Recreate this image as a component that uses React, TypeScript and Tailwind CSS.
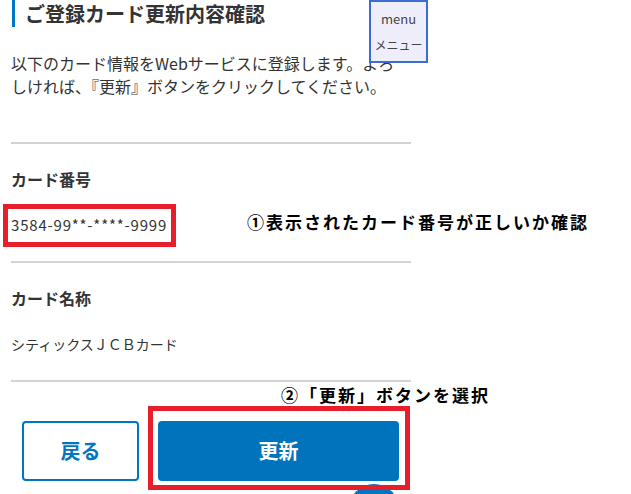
import React from "react";

type Row = {
  label: string;
  value: string;
  marked?: boolean;
  note?: string;
};

const rows: Row[] = [
  {
    label: "カード番号",
    value: "3584-99**-****-9999",
    marked: true,
    note: "①表示されたカード番号が正しいか確認",
  },
  { label: "カード名称", value: "シティックスＪＣＢカード" },
];

function InfoRow({ row }: { row: Row }) {
  return (
    <div className="border-t-2 border-[#d4d2d4] pt-[23px] pb-[14px]">
      <div className="text-[16px] leading-[24px] font-bold text-[#333]">{row.label}</div>
      <div className="mt-[13px] flex items-center">
        <div
          className={
            "-ml-[8px] flex h-[43px] shrink-0 items-center border-[5px] pl-[3px] whitespace-nowrap text-[#333] " +
            (row.marked
              ? "w-[173px] border-[#e61f2b] text-[15px] tracking-[0.8px]"
              : "border-transparent text-[14px]")
          }
        >
          {row.value}
        </div>
        {row.note && (
          <span className="ml-[71px] shrink-0 pb-[8px] text-[17px] leading-[24px] font-bold tracking-[2px] whitespace-nowrap text-black">
            {row.note}
          </span>
        )}
      </div>
    </div>
  );
}

export default function App() {
  return (
    <div className="relative h-[494px] w-[631px] overflow-hidden bg-white font-['Noto_Sans_CJK_JP','Noto_Sans',sans-serif] text-[#333]">
      <div className="ml-[12px] flex h-[27px] items-center border-l-[3px] border-[#0075c2] pl-[10px]">
        <h1 className="text-[20px] leading-[26px] font-bold text-[#333]">ご登録カード更新内容確認</h1>
      </div>

      <div className="ml-[11px] w-[400px]">
        <p className="mt-[25px] w-[392px] text-[16px] leading-[23px]">
          以下のカード情報をWebサービスに登録します。よろしければ、『更新』ボタンをクリックしてください。
        </p>

        <div className="mt-[44px]">
          {rows.map((r) => (
            <InfoRow key={r.label} row={r} />
          ))}
          <div className="border-t-2 border-[#d4d2d4]" />
        </div>
      </div>

      <div className="mt-px pl-[281px] text-[17px] leading-[24px] font-bold tracking-[2px] text-black">
        ②「更新」ボタンを選択
      </div>

      <div className="-mt-px flex items-start pl-[22px]">
        <button className="mt-[15px] flex h-[60px] w-[117px] items-center justify-center rounded-[4px] border-2 border-[#0075c2] text-[20px] font-bold text-[#0075c2]">
          戻る
        </button>
        <div className="relative z-10 ml-[9px] border-[5px] border-[#e61f2b] pt-[10px] pr-[6px] pb-[4px] pl-[5px]">
          <button className="flex h-[60px] w-[241px] items-center justify-center rounded-[4px] bg-[#0073bd] text-[20px] font-bold text-white">
            更新
          </button>
        </div>
      </div>

      <div className="absolute top-[484px] left-[349px] h-[50px] w-[50px] rounded-full bg-[#0075c2]" />

      <div className="absolute top-0 left-[369px] flex h-[63px] w-[59px] flex-col items-center border-2 border-[#3c6bd6] bg-[#eeeefb] text-[#444]">
        <span className="mt-[8px] text-[13px] leading-[18px]">menu</span>
        <span className="mt-[8px] text-[12px] leading-[18px] whitespace-nowrap">メニュー</span>
      </div>
    </div>
  );
}
